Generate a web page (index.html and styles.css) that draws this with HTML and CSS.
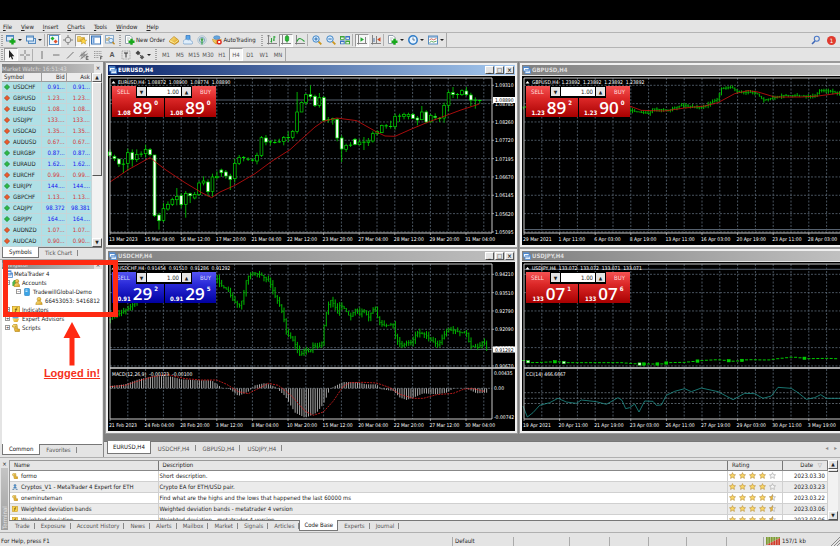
FILE: index.html
```html
<!DOCTYPE html>
<html lang="en">
<head>
<meta charset="utf-8">
<title>MetaTrader 4</title>
<link rel="stylesheet" href="styles.css">
</head>
<body>
<svg class="defs" aria-hidden="true">
  <defs>
    <linearGradient id="gold" x1="0" y1="0" x2="1" y2="1"><stop offset="0" stop-color="#ffe889"/><stop offset="1" stop-color="#d79a14"/></linearGradient>
  </defs>
  <symbol id="i-newchart" viewBox="0 0 10 10"><rect x=".5" y=".5" width="7" height="5.5" fill="#dceaf8" stroke="#4f86bd"/><path d="M1 1.3h6" stroke="#4f86bd"/><path d="M6.5 3.5v6M3.5 6.5h6" stroke="#17a81b" stroke-width="2.4"/></symbol>
  <symbol id="i-profiles" viewBox="0 0 10 10"><rect x="2.5" y="3.5" width="7" height="5" fill="#cfe2f5" stroke="#5a8dc0"/><rect x=".5" y="1" width="7" height="5" fill="#e6f1fb" stroke="#4f86bd"/><path d="M1 2h6" stroke="#4f86bd"/></symbol>
  <symbol id="i-market" viewBox="0 0 10 10"><rect x=".5" y=".5" width="9" height="9" fill="#f3f8fd" stroke="#5a90c6"/><path d="M3.5 1.5l2 2-2 2-2-2z" fill="#22b02a"/><path d="M6.6 4.6l2 2-2 2-2-2z" fill="#e2502a"/></symbol>
  <symbol id="i-target" viewBox="0 0 10 10"><circle cx="5" cy="5" r="2.8" fill="none" stroke="#909090"/><path d="M5 0v3M5 7v3M0 5h3M7 5h3" stroke="#808080"/></symbol>
  <symbol id="i-nav" viewBox="0 0 10 10"><path d="M.5 1.5h3l1 1h3v4h-7z" fill="url(#gold)" stroke="#c39a2b" stroke-width=".6"/><path d="M6.500 3l1 2 2.200.2-1.600 1.500.500 2.300-2.100-1.200-2.100 1.200.5-2.300L3.300 5.200l2.200-.2z" fill="#ffd84a" stroke="#b88a14" stroke-width=".5"/></symbol>
  <symbol id="i-terminal" viewBox="0 0 10 10"><rect x=".5" y="1" width="9" height="8" fill="#fff" stroke="#3a74b8"/><path d="M1 2h8" stroke="#3a74b8"/><path d="M2.500 2.500v6" stroke="#6da0dc" stroke-width="2"/></symbol>
  <symbol id="i-tester" viewBox="0 0 10 10"><rect x=".5" y=".5" width="8" height="7.500" fill="#e9f1f8" stroke="#8aa9c6"/><path d="M2 6V3M4 6V2" stroke="#b48a30"/><circle cx="6" cy="5.500" r="2.200" fill="#d5ebff" stroke="#5a8dc0" stroke-width=".8"/><path d="M7.500 7l2 2.200" stroke="#c58a1c" stroke-width="1.300"/></symbol>
  <symbol id="i-order" viewBox="0 0 10 10"><path d="M.5.5h4.500l2 2v6h-6.500z" fill="#fff" stroke="#7b8a99" stroke-width=".8"/><path d="M2 3h3M2 5h2" stroke="#9aa" stroke-width=".7"/><path d="M6.500 3.700v6M3.500 6.700h6" stroke="#17a81b" stroke-width="2.400"/></symbol>
  <symbol id="i-editor" viewBox="0 0 10 10"><path d="M.5 5.500L5 1.500l4.500 3.500v2L5.500 9.500l-5-2.500z" fill="url(#gold)" stroke="#b37a0d" stroke-width=".6"/><path d="M.5 5.500L5.500 8l4-3" fill="none" stroke="#fff2b0" stroke-width=".7"/></symbol>
  <symbol id="i-cloud" viewBox="0 0 10 10"><path d="M3 .5h4v5H3z" fill="#5aa5e8" stroke="#2d73bd" stroke-width=".7"/><path d="M1 9a2 2 0 0 1 0-3.500 2.500 2.500 0 0 1 4-.5 2.500 2.500 0 0 1 3.500 1A1.700 1.700 0 0 1 9 9z" fill="#dfeefb" stroke="#6d9bc9" stroke-width=".7"/></symbol>
  <symbol id="i-signal" viewBox="0 0 10 10"><circle cx="5" cy="5" r="4.200" fill="none" stroke="#a5bfd2" stroke-width=".9"/><circle cx="5" cy="5" r="2.600" fill="none" stroke="#6fa3bd" stroke-width=".9"/><circle cx="5" cy="4.500" r="1.300" fill="#3da14a"/><path d="M5 5v4.500" stroke="#38a544" stroke-width="1.200"/></symbol>
  <symbol id="i-auto" viewBox="0 0 10 10"><ellipse cx="4.800" cy="2.600" rx="3.200" ry="1.900" fill="#65a6de" stroke="#3777b4" stroke-width=".5"/><path d="M.3 4.200c3 1.200 6 1.200 9 0L8 7.500 4 9 1.500 7z" fill="url(#gold)" stroke="#b68011" stroke-width=".5"/><circle cx="7.200" cy="7" r="2.600" fill="#df2a1c"/><rect x="6.200" y="6" width="2" height="2" fill="#fff"/></symbol>
  <symbol id="i-bars" viewBox="0 0 10 10"><path d="M1.500 0v9.500M0 8.500h10M0 1.500l1.500-1.500L3 1.500" fill="none" stroke="#777" stroke-width=".9"/><path d="M4.500 3v4.500M3.500 6.500h1M7 1v5M7 2h1.500M6 5h1" stroke="#2aa337" stroke-width="1.100"/></symbol>
  <symbol id="i-candle" viewBox="0 0 10 10"><path d="M1.500 0v9.500M0 8.500h10" fill="none" stroke="#777" stroke-width=".9"/><path d="M6 0v7.500" stroke="#138a1d"/><rect x="4.300" y="1.200" width="3.400" height="4.800" rx=".8" fill="#26b833" stroke="#138a1d" stroke-width=".6"/></symbol>
  <symbol id="i-line" viewBox="0 0 10 10"><path d="M1.500 0v9.500M0 8.500h10" fill="none" stroke="#777" stroke-width=".9"/><path d="M2 6.500C3.500 2 6 3 9.500 6.500" fill="none" stroke="#2aa337" stroke-width="1.100"/></symbol>
  <symbol id="i-zoomin" viewBox="0 0 10 10"><path d="M6.300 6.300L9.300 9.300" stroke="#cb961e" stroke-width="1.800"/><circle cx="4" cy="4" r="3.200" fill="#d7ecff" stroke="#4387c6"/><path d="M4 2.300v3.400M2.300 4h3.400" stroke="#2b6fb2"/></symbol>
  <symbol id="i-zoomout" viewBox="0 0 10 10"><path d="M6.300 6.300L9.300 9.300" stroke="#cb961e" stroke-width="1.800"/><circle cx="4" cy="4" r="3.200" fill="#d7ecff" stroke="#4387c6"/><path d="M2.300 4h3.400" stroke="#2b6fb2"/></symbol>
  <symbol id="i-tile" viewBox="0 0 10 10"><path d="M0 1h4.700v3.800H0zM5.300 5.400H10v3.800H5.300z" fill="#3fa438"/><path d="M5.300 1H10v3.800H5.300zM0 5.400h4.700v3.800H0z" fill="#3c72c4"/><path d="M1 2.500h2.700v1.500H1zM6.300 2.500H9v1.500H6.300zM1 7h2.700v1.400H1zM6.300 7H9v1.400H6.300z" fill="#e8f2e8"/></symbol>
  <symbol id="i-scroll" viewBox="0 0 10 10"><path d="M1.500 0v9.500M0 8.500h10M8.500 2v6" fill="none" stroke="#777" stroke-width=".9"/><path d="M3.500 2.200l3.500 2.300-3.500 2.300z" fill="#25a833"/></symbol>
  <symbol id="i-shift" viewBox="0 0 10 10"><path d="M1.500 0v9.500M0 8.500h10M5.500 1v7" fill="none" stroke="#777" stroke-width=".9"/><path d="M9.500 2.200L6.200 4.500l3.300 2.300z" fill="#cf4a25"/><path d="M3 3v4" stroke="#5078a8"/></symbol>
  <symbol id="i-clock" viewBox="0 0 10 10"><circle cx="5" cy="5" r="4.200" fill="#e8f4ff" stroke="#2f7cc7" stroke-width="1.500"/><path d="M5 2.500V5h2" fill="none" stroke="#44617e" stroke-width=".8"/></symbol>
  <symbol id="i-template" viewBox="0 0 10 10"><rect x=".5" y="1" width="9" height="8" fill="#fff" stroke="#5a8dc0"/><path d="M1 2h8" stroke="#4f86bd"/><path d="M1.500 4.800l2-1 2 1 3-1.300" fill="none" stroke="#c04535" stroke-width=".8"/><path d="M1.500 7.500l2-1.200 2 .8 3-1" fill="none" stroke="#37943e" stroke-width=".8"/></symbol>
  <symbol id="i-search" viewBox="0 0 10 10"><path d="M1 9l3-3" stroke="#3f67b5" stroke-width="1.600"/><circle cx="5.800" cy="3.800" r="2.500" fill="none" stroke="#4a78c8" stroke-width="1.100"/></symbol>
  <symbol id="i-cursor" viewBox="0 0 10 10"><path d="M3 0v8l1.800-1.600L6 9.500l1.200-.5L6 6.200h2.300z" fill="#222"/></symbol>
  <symbol id="i-cross" viewBox="0 0 10 10"><path d="M5 0v4M5 6v4M0 5h4M6 5h4" stroke="#666" stroke-width=".8"/></symbol>
  <symbol id="i-vline" viewBox="0 0 10 10"><path d="M5 1v8" stroke="#666" stroke-width=".9"/></symbol>
  <symbol id="i-hline" viewBox="0 0 10 10"><path d="M2 5h6.500" stroke="#666" stroke-width=".9"/></symbol>
  <symbol id="i-trend" viewBox="0 0 10 10"><path d="M2 8.500L8.500 2" stroke="#666" stroke-width=".9"/></symbol>
  <symbol id="i-channel" viewBox="0 0 10 10"><path d="M.5 6.500l7-5.500M1.500 9l7-5.500M3 2.500v6M5 1.500v6M1.500 5h7" stroke="#777" stroke-width=".8"/><path d="M9.500 6.500h-2.300v3h2.300M7.200 8h2" fill="none" stroke="#444" stroke-width=".7"/></symbol>
  <symbol id="i-fib" viewBox="0 0 10 10"><path d="M1 1.500h8M1 3.500h8M1 5.500h8M1 7.500h5" stroke="#888" stroke-width=".8" stroke-dasharray="1 .6"/><path d="M9.500 6.500h-2v3M7.500 8h1.600" fill="none" stroke="#444" stroke-width=".7"/></symbol>
  <symbol id="i-label" viewBox="0 0 10 10"><rect x="1" y="1" width="8" height="8" fill="none" stroke="#888" stroke-width=".7" stroke-dasharray="1 .7"/><path d="M3 3h4M5 3v4.500" stroke="#333"/></symbol>
  <symbol id="i-arrows" viewBox="0 0 10 10"><path d="M3 .5L5.500 3 3 5.200.5 3z" fill="#444"/><path d="M4.500 4.500l2 2" stroke="#555"/><path d="M7 5l2.300 2.200L7 9.500 4.800 7.200z" fill="#555"/></symbol>
  <symbol id="i-up" viewBox="0 0 8 8"><path d="M4 .5L7.500 4 4 7.500.5 4z" fill="#2cb944" stroke="#14772a" stroke-width=".8"/></symbol>
  <symbol id="i-down" viewBox="0 0 8 8"><path d="M4 .5L7.500 4 4 7.500.5 4z" fill="#ee5a2a" stroke="#9c3217" stroke-width=".8"/></symbol>
  <symbol id="i-window" viewBox="0 0 8 8"><rect x="2" y="3" width="5.500" height="4.500" fill="#e4effb" stroke="#4d88cf" stroke-width=".8"/><rect x=".5" y=".8" width="5.500" height="4.200" fill="#f5faff" stroke="#4d88cf" stroke-width=".8"/><path d="M.5 1.500H6M2 3.800h5.500" stroke="#4d88cf"/></symbol>
  <symbol id="i-server" viewBox="0 0 8 8"><rect x="1.500" y=".3" width="5" height="7.400" rx="1" fill="#3ba4e6" stroke="#1c76b8" stroke-width=".5"/><path d="M2.500 2h2M2.500 3.500h2" stroke="#e2f4ff" stroke-width=".8"/></symbol>
  <symbol id="i-user" viewBox="0 0 8 8"><circle cx="4" cy="2.200" r="1.900" fill="url(#gold)" stroke="#b1830f" stroke-width=".5"/><path d="M.8 7.600C.8 4.800 2.500 4 4 4s3.200.8 3.200 3.600z" fill="url(#gold)" stroke="#b1830f" stroke-width=".5"/></symbol>
  <symbol id="i-users" viewBox="0 0 8 8"><path d="M.4 7V3.500L2 1h2v6z" fill="#51b44b"/><circle cx="5" cy="2.200" r="1.800" fill="url(#gold)" stroke="#a77a0d" stroke-width=".5"/><path d="M2 7.700C2 4.800 3.500 4 5 4s2.700.8 2.700 3.700z" fill="url(#gold)" stroke="#a77a0d" stroke-width=".5"/></symbol>
  <symbol id="i-fx" viewBox="0 0 8 8"><rect x=".5" y=".5" width="7" height="7" fill="#fbd44a" stroke="#c4941a" stroke-width=".7"/><path d="M5.500 1.800c-1.500-.3-1.400 1-1.700 2.600-.2 1.400-.5 2-1.300 1.700M2.800 3.700h2.400" fill="none" stroke="#4d3b0d" stroke-width=".7"/></symbol>
  <symbol id="i-expert" viewBox="0 0 8 8"><ellipse cx="3.500" cy="2.500" rx="3" ry="1.700" fill="#5fa3dc"/><path d="M.3 3.500h7L5.500 7H2z" fill="url(#gold)"/></symbol>
  <symbol id="i-script" viewBox="0 0 8 8"><path d="M1.500.5H5l.5 4.500H7.500v2.500H3L2 3H.5V1.500z" fill="url(#gold)" stroke="#b48413" stroke-width=".6"/><path d="M2.800 2.300h1.500M3 4h1.500" stroke="#8f6b17" stroke-width=".5"/></symbol>
  <symbol id="i-robot" viewBox="0 0 8 8"><circle cx="4" cy="2" r="1.500" fill="#5b9bd3" stroke="#2d5f91" stroke-width=".5"/><path d="M2 4h4v2H2z" fill="#4b88c0"/><path d="M.5 7.200h2.500M5 7.200h2.500" stroke="#3d6a94"/></symbol>
  <symbol id="i-star" viewBox="0 0 8 8"><path d="M4 .7l1 2.200 2.500.3-1.800 1.600.5 2.500L4 6.100 1.800 7.300l.5-2.500L.5 3.200 3 2.900z" fill="#fbd765" stroke="#b98f3d" stroke-width=".7"/></symbol>
  <symbol id="i-star0" viewBox="0 0 8 8"><path d="M4 .7l1 2.200 2.500.3-1.800 1.600.5 2.500L4 6.100 1.800 7.300l.5-2.500L.5 3.200 3 2.900z" fill="#f6f6f6" stroke="#a5a5a5" stroke-width=".7"/></symbol>
  <symbol id="i-starh" viewBox="0 0 8 8"><path d="M4 .7l1 2.200 2.500.3-1.800 1.600.5 2.500L4 6.100 1.800 7.300l.5-2.500L.5 3.200 3 2.900z" fill="#f6f6f6" stroke="#a5a5a5" stroke-width=".7"/><path d="M4 .7v5.400L1.800 7.300l.5-2.500L.5 3.200 3 2.900z" fill="#f0bd35" stroke="#b98f3d" stroke-width=".6"/></symbol>
</svg>

<div class="backdrop"></div>

<nav class="menu">
  <button><u>F</u>ile</button><button><u>V</u>iew</button><button><u>I</u>nsert</button><button><u>C</u>harts</button><button><u>T</u>ools</button><button><u>W</u>indow</button><button><u>H</u>elp</button>
</nav>

<div class="toolbar">
  <div class="strip">
    <i class="grip"></i>
    <button class="tool drop" aria-label="New chart"><svg><use href="#i-newchart"/></svg></button>
    <button class="tool drop" aria-label="Profiles"><svg><use href="#i-profiles"/></svg></button>
    <i class="sep"></i>
    <button class="tool on" aria-label="Market Watch"><svg><use href="#i-market"/></svg></button>
    <button class="tool" aria-label="Data Window"><svg><use href="#i-target"/></svg></button>
    <button class="tool on" aria-label="Navigator"><svg><use href="#i-nav"/></svg></button>
    <button class="tool on" aria-label="Terminal"><svg><use href="#i-terminal"/></svg></button>
    <button class="tool" aria-label="Strategy Tester"><svg><use href="#i-tester"/></svg></button>
    <i class="grip"></i>
    <button class="tool wide"><svg><use href="#i-order"/></svg>New Order</button>
    <button class="tool" aria-label="MetaEditor"><svg><use href="#i-editor"/></svg></button>
    <button class="tool" aria-label="Hosting"><svg><use href="#i-cloud"/></svg></button>
    <button class="tool" aria-label="Signals"><svg><use href="#i-signal"/></svg></button>
    <button class="tool wider"><svg><use href="#i-auto"/></svg>AutoTrading</button>
    <i class="grip"></i>
    <button class="tool" aria-label="Bar Chart"><svg><use href="#i-bars"/></svg></button>
    <button class="tool on" aria-label="Candlesticks"><svg><use href="#i-candle"/></svg></button>
    <button class="tool" aria-label="Line Chart"><svg><use href="#i-line"/></svg></button>
    <i class="sep"></i>
    <button class="tool" aria-label="Zoom In"><svg><use href="#i-zoomin"/></svg></button>
    <button class="tool" aria-label="Zoom Out"><svg><use href="#i-zoomout"/></svg></button>
    <button class="tool" aria-label="Tile Windows"><svg><use href="#i-tile"/></svg></button>
    <i class="sep"></i>
    <button class="tool on" aria-label="Auto Scroll"><svg><use href="#i-scroll"/></svg></button>
    <button class="tool" aria-label="Chart Shift"><svg><use href="#i-shift"/></svg></button>
    <i class="sep"></i>
    <button class="tool drop" aria-label="Indicators"><svg><use href="#i-order"/></svg></button>
    <button class="tool drop" aria-label="Periods"><svg><use href="#i-clock"/></svg></button>
    <button class="tool drop" aria-label="Templates"><svg><use href="#i-template"/></svg></button>
  </div>
  <div class="right">
    <button class="tool" aria-label="Search"><svg><use href="#i-search"/></svg></button>
    <button class="alert">1</button>
  </div>
</div>
<div class="toolbar last">
  <div class="strip">
    <i class="grip"></i>
    <button class="tool on" aria-label="Cursor"><svg><use href="#i-cursor"/></svg></button>
    <button class="tool" aria-label="Crosshair"><svg><use href="#i-cross"/></svg></button>
    <i class="sep"></i>
    <button class="tool" aria-label="Vertical Line"><svg><use href="#i-vline"/></svg></button>
    <button class="tool" aria-label="Horizontal Line"><svg><use href="#i-hline"/></svg></button>
    <button class="tool" aria-label="Trendline"><svg><use href="#i-trend"/></svg></button>
    <button class="tool" aria-label="Channel"><svg><use href="#i-channel"/></svg></button>
    <button class="tool" aria-label="Fibonacci"><svg><use href="#i-fib"/></svg></button>
    <button class="tool letter">A</button>
    <button class="tool" aria-label="Text Label"><svg><use href="#i-label"/></svg></button>
    <button class="tool drop" aria-label="Arrows"><svg><use href="#i-arrows"/></svg></button>
    <i class="grip"></i>
    <button class="tool per">M1</button><button class="tool per">M5</button><button class="tool per">M15</button><button class="tool per">M30</button><button class="tool per">H1</button><button class="tool per on">H4</button><button class="tool per">D1</button><button class="tool per">W1</button><button class="tool per">MN</button>
  </div>
</div>

<main class="main">
  <aside class="side">
    <section class="watch">
      <header class="cap"><h2>Market Watch: 16:51:43</h2><button aria-label="Close Market Watch">×</button></header>
      <div class="scroller">
        <table class="quotes">
          <thead><tr><th>Symbol</th><th>Bid</th><th>Ask</th></tr></thead>
          <tbody>
            <tr class="u"><td><svg><use href="#i-up"/></svg>USDCHF</td><td>0.91...</td><td>0.91...</td></tr>
            <tr class="d"><td><svg><use href="#i-down"/></svg>GBPUSD</td><td>1.23...</td><td>1.23...</td></tr>
            <tr class="d"><td><svg><use href="#i-down"/></svg>EURUSD</td><td>1.08...</td><td>1.08...</td></tr>
            <tr class="d"><td><svg><use href="#i-down"/></svg>USDJPY</td><td>133....</td><td>133....</td></tr>
            <tr class="d"><td><svg><use href="#i-down"/></svg>USDCAD</td><td>1.35...</td><td>1.35...</td></tr>
            <tr class="d"><td><svg><use href="#i-down"/></svg>AUDUSD</td><td>0.67...</td><td>0.67...</td></tr>
            <tr class="u"><td><svg><use href="#i-up"/></svg>EURGBP</td><td>0.87...</td><td>0.87...</td></tr>
            <tr class="u"><td><svg><use href="#i-up"/></svg>EURAUD</td><td>1.62...</td><td>1.62...</td></tr>
            <tr class="d"><td><svg><use href="#i-down"/></svg>EURCHF</td><td>0.99...</td><td>0.99...</td></tr>
            <tr class="u"><td><svg><use href="#i-up"/></svg>EURJPY</td><td>144....</td><td>144....</td></tr>
            <tr class="d"><td><svg><use href="#i-down"/></svg>GBPCHF</td><td>1.13...</td><td>1.13...</td></tr>
            <tr class="u"><td><svg><use href="#i-up"/></svg>CADJPY</td><td>98.372</td><td>98.381</td></tr>
            <tr class="u"><td><svg><use href="#i-up"/></svg>GBPJPY</td><td>164....</td><td>164....</td></tr>
            <tr class="d"><td><svg><use href="#i-down"/></svg>AUDNZD</td><td>1.07...</td><td>1.07...</td></tr>
            <tr class="d"><td><svg><use href="#i-down"/></svg>AUDCAD</td><td>0.90...</td><td>0.90...</td></tr>
          </tbody>
        </table>
        <div class="bar"><button class="arr" aria-label="Scroll up">▲</button><i class="thumb"></i><button class="arr end" aria-label="Scroll down">▼</button></div>
      </div>
      <div class="tabs"><button class="sel">Symbols</button><button>Tick Chart</button></div>
    </section>
    <section class="navi">
      <header class="cap"><h2>Navigator</h2><button aria-label="Close Navigator">×</button></header>
      <ul class="tree">
        <li><svg><use href="#i-window"/></svg>MetaTrader 4</li>
        <li class="l1"><b>−</b><svg><use href="#i-users"/></svg>Accounts</li>
        <li class="l2"><b>−</b><svg><use href="#i-server"/></svg>TradewillGlobal-Demo</li>
        <li class="l3"><svg><use href="#i-user"/></svg>66453053: 5416812</li>
        <li class="l1"><b>+</b><svg><use href="#i-fx"/></svg>Indicators</li>
        <li class="l1"><b>+</b><svg><use href="#i-expert"/></svg>Expert Advisors</li>
        <li class="l1"><b>+</b><svg><use href="#i-script"/></svg>Scripts</li>
      </ul>
      <div class="tabs"><button class="sel">Common</button><button>Favorites</button></div>
      <div class="mark"></div>
      <div class="note">
        <svg class="arrow" viewBox="0 0 18 44"><path d="M9 0l8.500 16h-6v27.500h-5V16h-6z" fill="#ff2a12"/></svg>
        <span>Logged in!</span>
      </div>
    </section>
  </aside>

  <section class="desk">
    <div class="windows">
      <article class="win active">
        <header><svg><use href="#i-window"/></svg><h3>EURUSD,H4</h3><button aria-label="Minimize">_</button><button aria-label="Maximize">□</button><button aria-label="Close">×</button></header>
        <div class="chart" data-chart="eurusd"><svg class="plot"></svg>
          <div class="deal red"><button><span>SELL</span><span class="px"><small>1.08</small><b>89</b><sup>0</sup></span></button><button class="buy"><span>BUY</span><span class="px"><small>1.08</small><b>89</b><sup>0</sup></span></button>
          <div class="vol"><button aria-label="Less">▼</button><input aria-label="EURUSD volume" value="1.00"><button aria-label="More">▲</button></div></div>
        </div>
      </article>
      <article class="win cut">
        <header><svg><use href="#i-window"/></svg><h3>GBPUSD,H4</h3></header>
        <div class="chart" data-chart="gbpusd"><svg class="plot"></svg>
          <div class="deal red"><button><span>SELL</span><span class="px"><small>1.23</small><b>89</b><sup>2</sup></span></button><button class="buy"><span>BUY</span><span class="px"><small>1.23</small><b>90</b><sup>0</sup></span></button>
          <div class="vol"><button aria-label="Less">▼</button><input aria-label="GBPUSD volume" value="1.00"><button aria-label="More">▲</button></div></div>
        </div>
      </article>
      <article class="win">
        <header><svg><use href="#i-window"/></svg><h3>USDCHF,H4</h3><button aria-label="Minimize">_</button><button aria-label="Maximize">□</button><button aria-label="Close">×</button></header>
        <div class="chart" data-chart="usdchf"><svg class="plot"></svg>
          <div class="deal blue"><button><span>SELL</span><span class="px"><small>0.91</small><b>29</b><sup>2</sup></span></button><button class="buy"><span>BUY</span><span class="px"><small>0.91</small><b>29</b><sup>5</sup></span></button>
          <div class="vol"><button aria-label="Less">▼</button><input aria-label="USDCHF volume" value="1.00"><button aria-label="More">▲</button></div></div>
        </div>
      </article>
      <article class="win cut">
        <header><svg><use href="#i-window"/></svg><h3>USDJPY,H4</h3></header>
        <div class="chart" data-chart="usdjpy"><svg class="plot"></svg>
          <div class="deal red"><button><span>SELL</span><span class="px"><small>133</small><b>07</b><sup>1</sup></span></button><button class="buy"><span>BUY</span><span class="px"><small>133</small><b>07</b><sup>6</sup></span></button>
          <div class="vol"><button aria-label="Less">▼</button><input aria-label="USDJPY volume" value="1.00"><button aria-label="More">▲</button></div></div>
        </div>
      </article>
    </div>
    <div class="tabs charts"><button class="sel">EURUSD,H4</button><button>USDCHF,H4</button><button>GBPUSD,H4</button><button>USDJPY,H4</button><span class="pager"><button aria-label="Previous">◂</button><button aria-label="Next">▸</button></span></div>
  </section>
</main>

<section class="term">
  <div class="spine"><button aria-label="Close Terminal">×</button><h2>Terminal</h2></div>
  <div class="body">
    <div class="scroller">
      <div class="clip">
      <table class="code">
        <colgroup><col class="c1"><col><col class="c3"><col class="c4"></colgroup>
        <thead><tr><th>Name</th><th>Description</th><th>Rating</th><th>Date <i>▽</i></th></tr></thead>
        <tbody>
          <tr><td><svg><use href="#i-script"/></svg>formo</td><td>Short description.</td><td><svg><use href="#i-star"/></svg><svg><use href="#i-star"/></svg><svg><use href="#i-star"/></svg><svg><use href="#i-star"/></svg><svg><use href="#i-star0"/></svg></td><td>2023.03.30</td></tr>
          <tr><td><svg><use href="#i-robot"/></svg>Cryptos_V1 - MetaTrader 4 Expert for ETH</td><td>Crypto EA for ETH/USD pair.</td><td><svg><use href="#i-star"/></svg><svg><use href="#i-star"/></svg><svg><use href="#i-star"/></svg><svg><use href="#i-star"/></svg><svg><use href="#i-star0"/></svg></td><td>2023.03.23</td></tr>
          <tr><td><svg><use href="#i-script"/></svg>oneminuteman</td><td>Find what are the highs and the lows that happened the last 60000 ms</td><td><svg><use href="#i-star"/></svg><svg><use href="#i-star"/></svg><svg><use href="#i-star"/></svg><svg><use href="#i-star"/></svg><svg><use href="#i-starh"/></svg></td><td>2023.03.22</td></tr>
          <tr><td><svg><use href="#i-fx"/></svg>Weighted deviation bands</td><td>Weighted deviation bands - metatrader 4 version</td><td><svg><use href="#i-star"/></svg><svg><use href="#i-star"/></svg><svg><use href="#i-star"/></svg><svg><use href="#i-star"/></svg><svg><use href="#i-starh"/></svg></td><td>2023.03.06</td></tr>
          <tr><td><svg><use href="#i-fx"/></svg>Weighted deviation</td><td>Weighted deviation - metatrader 4 version</td><td><svg><use href="#i-star"/></svg><svg><use href="#i-star"/></svg><svg><use href="#i-star"/></svg><svg><use href="#i-star"/></svg><svg><use href="#i-starh"/></svg></td><td>2023.03.06</td></tr>
        </tbody>
      </table>
      </div>
      <div class="bar"><button class="arr" aria-label="Scroll up">▲</button><i class="thumb short"></i><button class="arr end" aria-label="Scroll down">▼</button></div>
    </div>
    <div class="tabs bottom"><button>Trade</button><button>Exposure</button><button>Account History</button><button>News</button><button>Alerts</button><button>Mailbox</button><button>Market</button><button>Signals</button><button>Articles</button><button class="sel">Code Base</button><button>Experts</button><button>Journal</button></div>
  </div>
</section>

<footer class="status">
  <span>For Help, press F1</span><span>Default</span><span></span><span></span><span></span><span></span><span></span><span></span>
  <span class="net"><svg viewBox="0 0 14 8"><path d="M0 0h14v1L0 8z" fill="#7d9c35"/><path d="M0 8L14 1v7z" fill="#cf3a2a"/><path d="M2 0v8M4.500 0v8M7 0v8M9.500 0v8M12 0v8" stroke="#e9e9e3" stroke-width=".5"/></svg>157/1 kb
    <svg class="resize" viewBox="0 0 9 9"><path d="M0 9l9-9M3 9l6-6M6 9l3-3" stroke="#8a8a8a"/></svg></span>
</footer>
<script src="charts.js"></script>
</body>
</html>
```
FILE: styles.css
```css
* { box-sizing: border-box; }
html, body { height: 100%; }
body {
  margin: 0;
  display: flex;
  flex-direction: column;
  overflow: hidden;
  background: #e4e4e4;
  color: #222;
  font: 6px/8px "DejaVu Sans Condensed", "DejaVu Sans", sans-serif;
}
button, input {
  font: inherit;
  color: inherit;
  margin: 0;
  padding: 0;
  border: 0;
  background: none;
  border-radius: 0;
}
h2, h3 { margin: 0; font: inherit; }
svg { display: block; flex: none; }
i { font-style: normal; }
.defs { position: absolute; width: 0; height: 0; }

.backdrop { flex: none; height: 20px; background: #000; }

.menu { flex: none; height: 12px; display: flex; align-items: center; gap: 9px; padding: 2px 3px 0; }

.toolbar { flex: none; height: 15px; display: flex; justify-content: space-between; border-top: 1px solid #b4b4b4; }
.toolbar.last { border-bottom: 1px solid #9a9a9a; }
.strip { display: flex; align-items: center; border-right: 1px solid #a8a8a8; }
.tool { flex: none; width: 14px; height: 13px; display: flex; align-items: center; justify-content: center; }
.tool svg { width: 10px; height: 10px; }
.tool.on { background: #f6f6f6; border: 1px solid; border-color: #999 #fff #fff #999; }
.tool.drop { width: 20px; gap: 2px; }
.tool.drop::after { content: ""; border: 2px solid transparent; border-top-color: #222; border-bottom: 0; }
.tool.wide { width: 44px; gap: 1px; }
.tool.wider { width: 50px; gap: 1px; }
.tool.letter { font: bold 7px/8px "Liberation Sans", sans-serif; color: #555; }
.tool.per { color: #555; }
.grip { width: 6px; height: 11px; padding-left: 2px; }
.grip::before { content: ""; display: block; width: 2px; height: 11px; background: repeating-linear-gradient(#a4a4a4 0 1px, #e8e8e8 1px 2px); }
.strip > .grip:first-child { width: 4px; padding-left: 1px; }
.sep { width: 3px; height: 12px; border-left: 1px solid #b0b0b0; }
.right { display: flex; align-items: center; gap: 4px; padding-right: 4px; }
.alert { width: 9px; height: 9px; border-radius: 5px; background: #e03a2e; color: #fff; line-height: 9px; }

.main { flex: 1; min-height: 0; display: flex; }
.side { flex: none; width: 104px; display: flex; flex-direction: column; border-right: 1px solid #888; }
.watch { flex: none; height: 197px; display: flex; flex-direction: column; padding: 1px 1px 0 2px; }
.cap { flex: none; height: 10px; display: flex; align-items: center; }
.cap h2 { flex: 1; height: 9px; line-height: 9px; background: linear-gradient(90deg, #808080, #c0c0c0); color: #dcdcdc; }
.cap button { width: 8px; }
.navi .cap { height: 9px; }
.scroller { flex: 1; min-height: 0; display: flex; }
.quotes { flex: 1; height: 100%; border-collapse: collapse; table-layout: fixed; background: #b0e0e6; }
.quotes th, .quotes td { padding: 0 1px 0 0; text-align: right; border-right: 1px solid #c6d5d8; border-bottom: 1px solid #c6d5d8; line-height: 8px; }
.quotes th { height: 8px; font-weight: normal; background: #ececec; border-color: #9c9c9c; line-height: 7px; }
.quotes th:first-child, .quotes td:first-child { width: 39px; text-align: left; padding-left: 2px; }
.quotes td svg { display: inline-block; width: 6px; height: 6px; margin-right: 3px; vertical-align: -1px; }
.u td + td { color: #1414f0; }
.d td + td { color: #d83434; }
.bar { flex: none; width: 10px; display: flex; flex-direction: column; background: #f2f2f2; }
.arr { height: 9px; font-size: 5px; line-height: 7px; background: #e4e4e4; border: 1px solid; border-color: #fff #555 #555 #fff; }
.arr.end { margin-top: auto; }
.thumb { height: 94px; background: #e4e4e4; border: 1px solid; border-color: #fff #555 #555 #fff; }
.thumb.short { height: 3px; }

.tabs { flex: none; height: 12px; display: flex; align-items: flex-start; border-top: 1px solid #777; }
.tabs button { height: 10px; padding: 0 6px; position: relative; color: #555; }
.tabs > button:not(.sel)::after { content: ""; position: absolute; right: 0; top: 2px; height: 6px; border-right: 1px solid #888; }
.tabs .sel { background: #fff; color: #111; border: 1px solid #777; border-top: 0; margin-top: -1px; height: 11px; }

.navi { flex: 1; position: relative; display: flex; flex-direction: column; padding: 0 1px 1px 2px; border-top: 1px solid #aaa; }
.tree { flex: 1; margin: 0; padding: 0 0 0 3px; list-style: none; background: #fff; white-space: nowrap; }
.tree li { height: 9px; display: flex; align-items: center; gap: 1px; }
.tree li:first-child svg { margin: 0; }
.tree svg { width: 8px; height: 8px; margin-right: 1px; }
.tree b { width: 5px; height: 5px; border: 1px solid #999; font: 4px/3px "DejaVu Sans", sans-serif; text-align: center; margin-right: 1px; }
.tree .l2 { padding-left: 11px; }
.tree .l3 { padding-left: 30px; }
.mark { position: absolute; left: 3px; top: 0; width: 115px; height: 57px; border: 5px solid #ff2a12; z-index: 5; }
.note { position: absolute; left: 41px; right: 0; top: 62px; display: flex; flex-direction: column; align-items: center; color: #f5301c; font: bold 11px/14px "Liberation Sans", sans-serif; text-decoration: underline; white-space: nowrap; }
.arrow { width: 18px; height: 44px; }

.desk { flex: 1; min-width: 0; display: flex; flex-direction: column; }
.windows { flex: 1; min-height: 0; display: grid; grid-template-columns: minmax(0, 411fr) minmax(0, 320fr); grid-template-rows: 1fr 1fr; gap: 2px 3px; padding: 1px 0 8px 2px; background: #808080; overflow: hidden; }
.win { min-height: 0; min-width: 0; display: flex; flex-direction: column; background: #e4e4e4; border: 2px solid #f0f0f0; box-shadow: 0 0 0 1px #9a9a9a; }
.win.cut { border-right: 0; }
.win header { flex: none; height: 10px; margin-bottom: 1px; display: flex; align-items: center; gap: 1px; padding: 0 1px; background: linear-gradient(90deg, #808080, #c0c0c0); color: #dcdcdc; font-weight: bold; }
.win.active header { background: linear-gradient(90deg, #0a246a, #a6caf0); color: #fff; }
.win header svg { width: 8px; height: 8px; }
.win h3 { flex: 1; }
.win header button { width: 9px; height: 8px; line-height: 6px; color: #111; background: #e4e4e4; border: 1px solid; border-color: #fff #555 #555 #fff; }
.chart { flex: 1; min-height: 0; position: relative; background: #000; }
.plot { position: absolute; inset: 0; width: 100%; height: 100%; }
.plot text { font: 5px "DejaVu Sans Condensed", "DejaVu Sans", sans-serif; fill: #fff; white-space: pre; }
.plot .tag { fill: #000; }

.deal { position: absolute; left: 4px; top: 10px; width: 104px; height: 31px; display: grid; grid-template-columns: 1fr 1fr; gap: 1px; background: #000; color: #fff; }
.deal > button { display: flex; flex-direction: column; justify-content: space-between; align-items: flex-start; padding: 2px 5px 0; }
.deal > .buy { align-items: flex-end; }
.red > button { background: linear-gradient(#f55252, #dc2828 40%, #a80000); color: #fdd; }
.blue > button { background: linear-gradient(#5454f0, #2a2ad8 40%, #0000a0); color: #ddf; }
.px { align-self: center; display: flex; align-items: flex-end; gap: 2px; color: #fff; }
.px small { font: bold 6px/9px "DejaVu Sans Condensed", "DejaVu Sans", sans-serif; }
.px b { font: 600 17px/18px "Open Sans", sans-serif; }
.px sup { align-self: flex-start; font: bold 6px/8px "DejaVu Sans Condensed", "DejaVu Sans", sans-serif; }
.vol { position: absolute; left: 24px; right: 24px; top: 0; height: 12px; padding: 1px 1px 2px; display: flex; gap: 1px; background: #000; color: #222; }
.vol button { width: 9px; background: #e4e4e4; font-size: 5px; line-height: 8px; }
.vol input { flex: 1; min-width: 0; background: #fff; text-align: right; padding-right: 2px; }

.charts { height: 16px; padding-left: 3px; }
.charts > button { padding: 0 6px; height: 13px; margin-right: 1px; }
.charts > button:not(.sel)::after { top: 3px; }
.charts .sel { height: 13px; padding: 0 5px; }
.tabs .pager { margin-left: auto; display: flex; padding-top: 1px; }
.tabs .pager button { padding: 0 3px; color: #888; }

.term { flex: none; height: 75px; display: flex; padding: 2px 2px 0 0; border-top: 1px solid #b0b0b0; }
.spine { flex: none; width: 9px; display: flex; flex-direction: column; padding: 0 1px 2px 1px; }
.spine h2 { flex: 1; writing-mode: vertical-rl; transform: rotate(180deg); background: linear-gradient(#a0a0a0, #c4c4c4); color: #e4e4e4; line-height: 7px; text-align: left; padding-top: 1px; }
.body { flex: 1; min-width: 0; display: flex; flex-direction: column; }
.clip { flex: 1; overflow: hidden; border: 1px solid #999; border-width: 1px 0 0 1px; background: #fff; }
.code { width: 100%; border-collapse: collapse; table-layout: fixed; white-space: nowrap; }
.code .c1 { width: 148px; }
.code .c3 { width: 55px; }
.code .c4 { width: 45px; }
.code th { height: 9px; padding: 0 4px; text-align: left; font-weight: normal; background: #e6e6e6; border-right: 1px solid #777; border-bottom: 1px solid #888; }
.code th:last-child, .code td:last-child { text-align: right; padding-right: 2px; }
.code th i { color: #999; margin: 0 3px; }
.code td { height: 11px; padding: 0 1px; border-right: 1px solid #d0d0d0; border-bottom: 1px solid #d0d0d0; }
.code td:first-child { padding-left: 2px; }
.code tbody tr:nth-child(even) { background: #ebebeb; }
.code td svg { display: inline-block; width: 6px; height: 6px; vertical-align: -1px; margin-right: 3px; }
.code td:nth-child(3) svg { width: 7px; height: 7px; }
.tabs.bottom { padding-left: 0; }
.bottom .sel { padding: 0 4px; }
.tabs.bottom > button:not(.sel) { padding: 0 5px 0 6px; }

.status { flex: none; height: 14px; display: grid; grid-template-columns: 452fr 61fr 56fr 40fr 39fr 38fr 40fr 37fr 77fr; align-items: center; border-top: 1px solid #b0b0b0; padding-top: 3px; }
.status span { height: 9px; min-width: 0; border-left: 1px solid #aaa; padding-left: 2px; }
.status span:first-child { border: 0; padding-left: 1px; }
.status .net { display: flex; gap: 2px; }
.net svg { width: 14px; height: 8px; }
.net .resize { width: 9px; height: 9px; margin-left: auto; }
```
FILE: charts.js
```js
// Chart space: x counts from the left edge of the plot, BASE is the plot width the series were recorded on.
const NS = 'http://www.w3.org/2000/svg';
const BASE = 382;
const STEP = 17.8;

// One row per candle: kind (h hollow, f filled, d doji), open/close band, high/low band; thirds of a pixel.
const EUR = `f270-280,262-285 f283-290,278-297 f291-306,291-315 d305-310,291-333 h272-304,260-325 f272-293,262-314 h277-293,262-300 d275-278,268-285 h262-275,248-287 f263-278,258-283
f279-461,279-465 f459-476,452-503 h440-475,423-480 h427-441,418-446 h412-427,407-432 h403-413,378-430 f401-428,393-438 h394-427,387-467 f395-401,392-423 h397-408,390-412
h363-398,358-402 h357-363,343-370 f360-389,352-403 h345-388,335-404 h343-347,328-352 f324-332,320-345 f330-342,324-350 f342-352,335-384 h304-350,290-362 h286-304,279-309
d285-288,282-298 d290-293,286-297 d293-297,288-299 h280-297,272-307 h227-280,222-285 f228-240,219-250 d238-240,234-250 d240-241,232-245 d238-240,230-243 h226-238,222-250
d225-228,208-240 h208-226,204-232 h150-208,90-215 h121-150,118-150 h98-121,95-130 f98-104,70-110 f103-130,98-135 h107-130,93-137 f107-175,103-180 d172-176,165-182
h170-174,167-188 f172-228,168-238 f228-261,220-300 h250-262,245-270 d248-252,240-255 f232-247,228-250 h240-248,232-250 d239-241,225-264 h237-241,228-252 h215-237,208-242
h209-215,205-220 h190-212,188-213 d190-192,186-200 d192-195,176-200 h163-194,155-203 d161-164,155-180 h157-163,152-172 h157-163,152-172 f157-169,152-170 f168-174,162-190
h150-173,132-175 f150-180,145-184 h160-179,156-183 f163-166,154-173 d168-170,165-180 h130-168,122-182 h92-130,85-148 f92-97,75-108 d96-98,93-110 h86-98,82-102
f87-98,75-102 f99-114,92-133 d113-116,106-140 d114-117,113-125`.split(/\s+/);

const CHARTS = {
  eurusd: {
    title: 'EURUSD,H4  1.08872  1.08900  1.08774  1.08890', top: 9.3, dy: 14, dx: 3,
    price: ['1.09310', '1.08785', '1.08260', '1.07720', '1.07195', '1.06670', '1.06145', '1.05620', '1.05095'],
    now: [24, '1.08890'], edge: true,
    dates: ['13 Mar 2023', '15 Mar 04:00', '16 Mar 12:00', '17 Mar 20:00', '21 Mar 04:00', '22 Mar 12:00', '23 Mar 20:00', '27 Mar 04:00', '28 Mar 12:00', '29 Mar 20:00', '31 Mar 04:00'],
    candles: EUR,
    ma: '15,360 70,323 120,295 135,287 180,322 240,362 290,392 320,407 345,390 390,370 450,335 500,298 555,263 600,222 630,195 655,178 695,168 755,176 815,210 840,222 870,223 915,203 965,182 1025,160 1065,145 1123,126'
  },
  gbpusd: {
    title: 'GBPUSD,H4  1.23892  1.23892  1.23892  1.23892', top: 9.3, dy: 14, dx: 4, now: [153.5],
    dates: ['29 Mar 2021', '1 Apr 11:00', '6 Apr 03:00', '8 Apr 19:00', '13 Apr 11:00', '16 Apr 03:00', '20 Apr 19:00', '23 Apr 11:00', '28 Apr 03:00'],
    rows: 9,
    bars: '15,135 335,145 360,150 395,155 400,140 450,145 490,130 550,138 580,122 600,110 610,80 640,76 660,90 715,93 735,115 765,108 795,100 850,102 890,103 905,85 940,88 975,98', swing: 8,
    ma: '335,132 370,145 440,147 500,138 560,132 600,122 650,95 690,86 720,90 770,105 850,105 900,102 975,92'
  },
  usdchf: {
    title: 'USDCHF,H4  0.91454  0.91510  0.91286  0.91292', top: 12.3, dy: 16, dx: 3, split: 106,
    price: ['0.94210', '0.93510', '0.92790', '0.92090', '0.91370', '0.90670'],
    now: [87.5, '0.91292'], edge: true,
    dates: ['21 Feb 2023', '24 Feb 04:00', '28 Feb 20:00', '3 Mar 12:00', '8 Mar 04:00', '10 Mar 20:00', '15 Mar 12:00', '20 Mar 04:00', '22 Mar 20:00', '27 Mar 12:00', '30 Mar 04:00'],
    bars: '15,220 25,208 50,200 70,188 90,170 100,145 150,130 250,120 320,110 335,95 345,115 370,135 385,165 405,180 415,150 425,95 445,80 470,88 495,110 510,150 525,180 535,210 545,265 560,275 575,305 585,330 600,310 615,320 625,295 635,305 650,295 657,240 665,195 675,160 690,180 695,210 705,175 720,190 735,215 750,190 765,205 775,190 790,215 810,180 820,225 835,240 865,235 873,280 890,300 905,290 920,290 935,260 960,265 980,285 1000,298 1015,270 1030,250 1050,255 1070,260 1085,262 1095,300 1120,305 1135,285 1145,305', swing: 13,
    sub: 'MACD(12,26,9)  -0.00123  -0.00100', subPrice: [[110.5, '0.00435'], [126.3, '0.00'], [154.5, '-0.00742']], zero: 126.3,
    hist: '15,420 60,415 100,400 150,390 200,392 230,400 280,403 320,403 350,425 375,430 400,450 430,437 450,418 480,411 510,422 540,450 570,500 600,515 615,510 635,500 655,475 675,430 690,420 715,408 755,409 785,415 815,415 830,430 865,435 885,455 905,462 925,455 955,442 995,445 1025,440 1045,428 1075,426 1095,432 1115,442 1145,440',
    signal: '15,422 60,418 100,405 140,393 185,385 240,398 290,402 335,402 365,415 400,437 430,443 455,430 490,412 520,418 560,450 600,495 625,508 655,498 685,465 715,420 735,410 775,409 815,411 855,425 885,445 925,457 955,457 995,446 1045,442 1075,430 1100,427 1140,437'
  },
  usdjpy: {
    title: 'USDJPY,H4  133.072  133.072  133.071  133.071', top: 12.3, dy: 16, dx: 4, split: 106, rows: 6, now: [7.3],
    dates: ['19 Apr 2021', '20 Apr 11:00', '21 Apr 19:00', '23 Apr 03:00', '26 Apr 11:00', '27 Apr 19:00', '29 Apr 03:00', '30 Apr 11:00', '3 May 19:00'],
    dashes: '15,343 30,347 45,350 120,347 140,350 200,350 310,350 360,354 430,354 450,350 500,349 560,343 600,341 650,346 690,341 750,342 780,338 825,333 870,338 930,337 975,339',
    sub: 'CCI(14) 466.6667', levels: [130.7, 136.3, 141.5],
    cci: '15,480 28,513 45,500 65,478 95,470 120,457 145,468 175,472 190,462 235,467 265,475 300,455 312,463 323,488 335,485 350,474 363,498 380,465 405,466 415,478 430,477 445,448 470,436 500,428 520,437 550,426 600,437 645,461 680,442 710,443 735,457 760,450 780,424 820,427 840,440 865,460 890,455 908,446 925,457 975,457'
  }
};

function draw(host) {
  const c = CHARTS[host.dataset.chart];
  const svg = host.querySelector('svg');
  svg.replaceChildren();
  const W = host.clientWidth, H = host.clientHeight;
  const right = c.edge ? W - 23 : W;
  const k = c.edge ? (right - 2) / BASE : 1;
  const bottom = H - 12;
  const X = z => 2 + (z / 3 - c.dx - 2) * k;
  const Y = z => z / 3 - c.dy;
  const add = (tag, at, text) => {
    const e = document.createElementNS(NS, tag);
    for (const n in at) e.setAttribute(n, at[n]);
    if (text) e.textContent = text;
    svg.append(e);
  };
  const pts = s => s.split(' ').map(p => p.split(',').map(Number));
  const poly = (s, stroke, dash) => add('polyline', { points: pts(s).map(p => X(p[0]) + ',' + Y(p[1])).join(' '), fill: 'none', stroke, 'stroke-width': 0.8, 'stroke-dasharray': dash || 'none' });
  const at = (list, x) => {
    let i = 1;
    while (i < list.length - 1 && list[i][0] < x) i++;
    const [a, b] = [list[i - 1], list[i]];
    return a[1] + (b[1] - a[1]) * (x - a[0]) / (b[0] - a[0]);
  };
  const line = (x1, y1, x2, y2, stroke, w, dash) => add('line', { x1, y1, x2, y2, stroke, 'stroke-width': w || 1, 'stroke-dasharray': dash || 'none' });

  const n = c.price ? c.price.length : c.rows;
  for (let i = 0; i < n; i++) {
    const y = c.top + i * 18.33;
    line(2, y, right, y, '#5a6876', 0.8, '2 1.5');
    if (c.price) {
      line(right, y, right + 2, y, '#ccc', 0.7);
      add('text', { x: right + 3, y: y + 2 }, c.price[i]);
    }
  }
  for (let x = 2 + STEP * k; x < right; x += STEP * k) line(x, 2, x, bottom, '#5a6876', 0.8, '2 1.5');
  (c.levels || []).forEach(y => line(2, y, right, y, '#76828c', 0.7, '2 1.5'));
  line(2, c.now[0], right, c.now[0], '#55616e', 1);

  if (c.candles) c.candles.forEach((s, i) => {
    const [o, cl, hi, lo] = s.slice(1).split(/[-,]/).map(Number);
    const x = 2 + i * 4.455 * k;
    line(x, Y(hi), x, Y(lo), '#00d800', 0.8);
    if (s[0] === 'd') line(x - 1.7, Y(o) + 0.5, x + 1.7, Y(o) + 0.5, '#00d800', 1);
    else add('rect', { x: x - 1.4, y: Y(o), width: 2.8, height: (cl - o) / 3, fill: s[0] === 'f' ? '#fff' : '#000', stroke: '#00d800', 'stroke-width': 0.7 });
  });
  if (c.bars) {
    const list = pts(c.bars);
    const end = list[list.length - 1][0];
    let seed = 7, prev = list[0][1];
    const rnd = () => (seed = (seed * 16807) % 2147483647) / 2147483647;
    for (let z = 16; z <= end && X(z) < right; z += 6.68) {
      const y = at(list, z);
      const hi = Math.min(y, prev) - rnd() * c.swing, lo = Math.max(y, prev) + rnd() * c.swing;
      line(X(z), Y(hi), X(z), Y(lo), '#00b400', 1);
      line(X(z) - 1, Y(prev), X(z), Y(prev), '#00b400', 0.7);
      line(X(z), Y(y), X(z) + 1, Y(y), '#00b400', 0.7);
      prev = y;
    }
  }
  if (c.dashes) {
    const list = pts(c.dashes);
    for (let z = 17, i = 0; X(z) < right; z += 13.37, i++) {
      const y = Y(at(list, z));
      const big = [1, 7, 9, 26, 27, 30, 32, 39, 46, 49, 63].includes(i);
      add('rect', { x: X(z) - 1.5, y: y - (big ? 1.2 : 0.5), width: 3, height: big ? 2.4 : 1, fill: [1, 9, 26].includes(i) ? '#dfffdf' : '#00c800', stroke: '#00e000', 'stroke-width': big ? 0.5 : 0 });
    }
  }
  if (c.ma) poly(c.ma, '#d01010');
  if (c.hist) {
    const list = pts(c.hist);
    line(2, c.zero, right, c.zero, '#76828c', 0.7, '2 1.500');
    for (let z = 16; z <= 1145; z += 6.68) line(X(z), c.zero, X(z), Y(at(list, z)), '#a8a8a8', 1);
    poly(c.signal, '#e02020', '2 1');
  }
  if (c.cci) poly(c.cci, '#20908c');

  line(2, 2, right, 2, '#c8c8c8', 1);
  line(2, 2, 2, bottom, '#c8c8c8', 1);
  line(2, bottom, right, bottom, '#c8c8c8', 1);
  if (c.split) line(2, c.split, c.edge ? W : right, c.split, '#d8d8d8', 1.5);
  if (c.edge) line(right, 2, right, bottom, '#c8c8c8', 1);
  c.dates.forEach((d, i) => {
    const x = 2 + i * 2 * STEP * k;
    line(x, bottom, x, bottom + 2, '#ccc', 0.7);
    add('text', { x: x - 1, y: bottom + 7.5 }, d);
  });
  add('path', { d: 'M3.500 7.500h4l-2-2.500z', fill: '#fff' });
  add('text', { x: 10, y: 8 }, c.title);
  if (c.sub) add('text', { x: 4, y: 114 }, c.sub);
  (c.subPrice || []).forEach(([y, t]) => add('text', { x: right + 2, y: y + 2 }, t));
  if (c.now[1]) {
    add('rect', { x: right + 1, y: c.now[0] - 3, width: 22, height: 6, fill: '#fff' });
    add('text', { x: right + 3, y: c.now[0] + 2, class: 'tag' }, c.now[1]);
  }
}

const drawAll = () => document.querySelectorAll('.chart').forEach(draw);
drawAll();
addEventListener('resize', drawAll);
```
